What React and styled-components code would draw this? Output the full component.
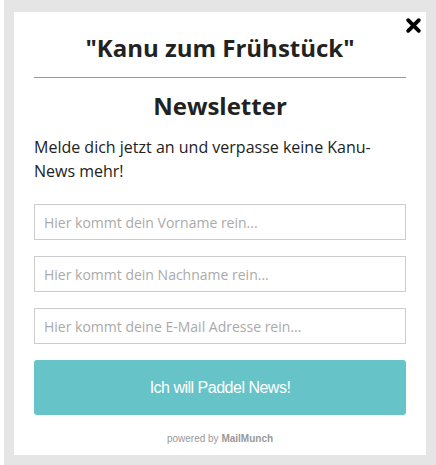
import React from 'react';
import styled, { createGlobalStyle } from 'styled-components';

const GlobalStyle = createGlobalStyle`
  html, body {
    margin: 0;
    padding: 0;
    background: #fff;
  }
  * {
    box-sizing: border-box;
  }
`;

const Frame = styled.div`
  margin-left: 4px;
  height: 465px;
  background: #e5e5e5;
  padding: 12px 10px 10px 10px;
`;

const Panel = styled.div`
  position: relative;
  height: 443px;
  background: #fff;
  padding: 20px 20px 0 20px;
  font-family: 'Open Sans', 'Liberation Sans', sans-serif;
  color: #222;
`;

const Close = styled.button`
  position: absolute;
  top: 3px;
  right: 3px;
  width: 20px;
  height: 20px;
  padding: 0;
  border: none;
  background: transparent;
  display: flex;
  align-items: center;
  justify-content: center;
  cursor: pointer;
`;

const Title = styled.h1`
  margin: 0;
  font-size: 24px;
  line-height: 32px;
  font-weight: 700;
  text-align: center;
`;

const Divider = styled.hr`
  margin: 13px 0 0 0;
  border: none;
  border-top: 1px solid #999;
`;

const Heading = styled.h2`
  margin: 12px 0 0 0;
  font-size: 24px;
  line-height: 32px;
  font-weight: 700;
  text-align: center;
`;

const Intro = styled.p`
  margin: 13px 0 0 0;
  font-size: 16px;
  line-height: 24px;
  color: #222;
`;

const Form = styled.form`
  margin-top: 21px;
  display: flex;
  flex-direction: column;
  gap: 16px;
`;

const Field = styled.input`
  height: 36px;
  width: 100%;
  border: 1px solid #ccc;
  padding: 0 9px;
  font-family: 'Open Sans', 'Liberation Sans', sans-serif;
  font-size: 14px;
  color: #333;
  outline: none;
  &::placeholder {
    color: #aaa;
  }
`;

const Submit = styled.button`
  height: 55px;
  width: 100%;
  border: none;
  border-radius: 3px;
  background: #66c4c8;
  color: #fff;
  font-family: 'Liberation Sans', Arial, sans-serif;
  font-size: 16px;
  letter-spacing: -0.5px;
  cursor: pointer;
`;

const Powered = styled.div`
  margin-top: 18px;
  text-align: center;
  font-family: 'Liberation Sans', Arial, sans-serif;
  font-size: 10px;
  color: #999;
  b {
    font-weight: 700;
  }
`;

const CloseIcon = () => (
  <svg width="17" height="17" viewBox="0 0 16 16">
    <path d="M3 3 L13 13 M13 3 L3 13" stroke="#000" strokeWidth="3.6" strokeLinecap="round" />
  </svg>
);

export default function App() {
  return (
    <>
      <GlobalStyle />
      <Frame>
        <Panel>
          <Close aria-label="Schließen">
            <CloseIcon />
          </Close>
          <Title>"Kanu zum Frühstück"</Title>
          <Divider />
          <Heading>Newsletter</Heading>
          <Intro>Melde dich jetzt an und verpasse keine Kanu-News mehr!</Intro>
          <Form onSubmit={(e) => e.preventDefault()}>
            <Field type="text" placeholder="Hier kommt dein Vorname rein..." />
            <Field type="text" placeholder="Hier kommt dein Nachname rein..." />
            <Field type="email" placeholder="Hier kommt deine E-Mail Adresse rein..." />
            <Submit type="submit">Ich will Paddel News!</Submit>
          </Form>
          <Powered>
            powered by <b>MailMunch</b>
          </Powered>
        </Panel>
      </Frame>
    </>
  );
}
